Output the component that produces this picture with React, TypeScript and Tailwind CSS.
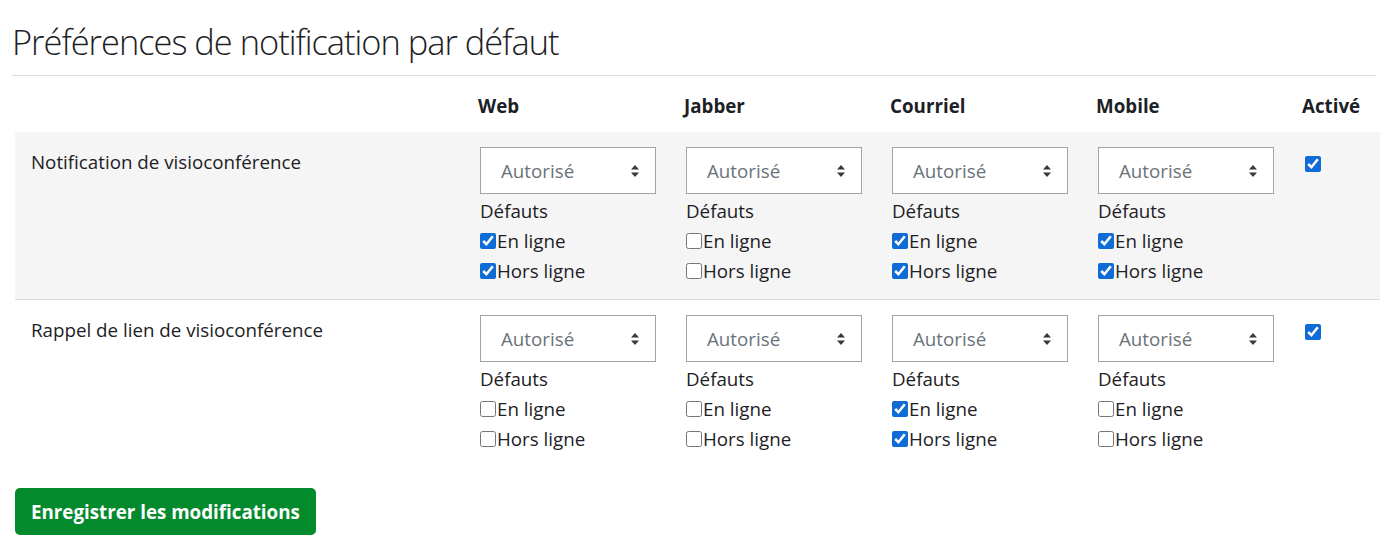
import React from 'react';

type Pref = { online: boolean; offline: boolean };

interface NotificationRow {
  label: string;
  prefs: Pref[];
  enabled: boolean;
}

const COLUMNS = ['Web', 'Jabber', 'Courriel', 'Mobile'];

const ROWS: NotificationRow[] = [
  {
    label: 'Notification de visioconférence',
    prefs: [
      { online: true, offline: true },
      { online: false, offline: false },
      { online: true, offline: true },
      { online: true, offline: true },
    ],
    enabled: true,
  },
  {
    label: 'Rappel de lien de visioconférence',
    prefs: [
      { online: false, offline: false },
      { online: false, offline: false },
      { online: true, offline: true },
      { online: false, offline: false },
    ],
    enabled: true,
  },
];

const GRID = 'grid grid-cols-[450px_206px_206px_206px_206px_91px]';

const SelectArrows = (): React.JSX.Element => (
  <svg width="10" height="14" viewBox="0 0 10 14" className="shrink-0">
    <path d="M1 5.5 L5 1 L9 5.5 Z" fill="#343a40" />
    <path d="M1 8.5 L5 13 L9 8.5 Z" fill="#343a40" />
  </svg>
);

const FakeSelect = (): React.JSX.Element => (
  <div className="flex h-[47px] w-[176px] items-center justify-between border border-[#a3a3a3] bg-white pl-[20px] pr-[15px] text-[#6a737b]">
    <span>Autorisé</span>
    <SelectArrows />
  </div>
);

const Check = ({ checked, label }: { checked: boolean; label: string }): React.JSX.Element => (
  <label className="flex h-[30px] items-center">
    <input type="checkbox" defaultChecked={checked} className="m-0 h-[16px] w-[16px] accent-[#0f6cd6]" />
    <span className="ml-[1px]">{label}</span>
  </label>
);

const PrefCell = ({ pref }: { pref: Pref }): React.JSX.Element => (
  <div className="px-[15px] pt-[15px] pb-[13px]">
    <FakeSelect />
    <div className="mt-[2px] leading-[30px]">Défauts</div>
    <Check checked={pref.online} label="En ligne" />
    <Check checked={pref.offline} label="Hors ligne" />
  </div>
);

export default function App(): React.JSX.Element {
  return (
    <div className="min-h-screen bg-white px-[12px] pt-[19px] text-[18.75px] leading-[30px] text-[#1d2125] [font-family:'Open_Sans',sans-serif]">
      <h2 className="text-[34.4px] font-light leading-[45px] tracking-[-1px] text-[#1d2125]">
        Préférences de notification par défaut
      </h2>
      <hr className="mt-[11px] mr-[8px] border-0 border-t border-[#dcdcdc]" />

      <div className="ml-[3px] mr-[4px]">
        <div className={`${GRID} h-[56px] pt-[16px] font-bold leading-[28px]`}>
          <div />
          {COLUMNS.map((col) => (
            <div key={col} className="px-[13px]">{col}</div>
          ))}
          <div className="px-[13px]">Activé</div>
        </div>

        {ROWS.map((row, idx) => (
          <div
            key={row.label}
            className={`${GRID} ${idx === 0 ? 'border-b border-[#dcdcdc] bg-[#f5f5f5]' : ''}`}
          >
            <div className="px-[16px] pt-[15px]">{row.label}</div>
            {row.prefs.map((pref, i) => (
              <PrefCell key={i} pref={pref} />
            ))}
            <div className="px-[16px] pt-[24px]">
              <input type="checkbox" defaultChecked={row.enabled} className="m-0 block h-[16px] w-[16px] accent-[#0f6cd6]" />
            </div>
          </div>
        ))}

        <button
          type="button"
          className="mt-[21px] h-[47px] rounded-[5px] bg-[#028a2c] px-[16px] font-bold text-white"
        >
          Enregistrer les modifications
        </button>
      </div>
    </div>
  );
}
